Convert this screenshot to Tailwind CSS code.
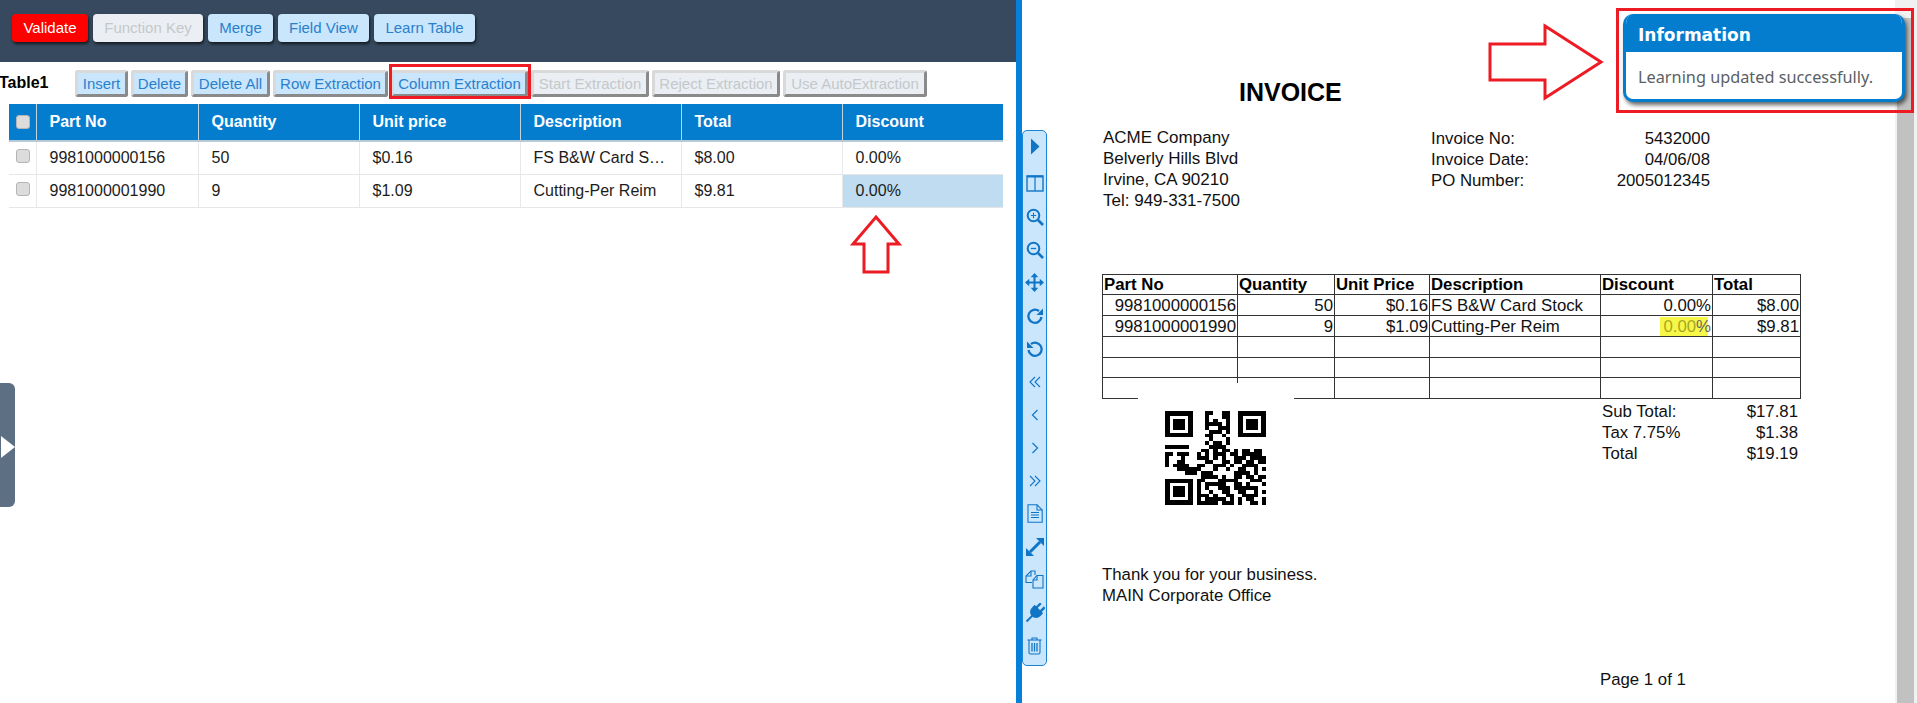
<!DOCTYPE html>
<html>
<head>
<meta charset="utf-8">
<script src="https://cdn.jsdelivr.net/npm/@tailwindcss/browser@4"></script>
</head>
<body class="bg-white">
<div class="relative flex w-[1917px] h-[703px] overflow-hidden font-['Liberation_Sans',Arial,sans-serif]">

  <!-- LEFT PANEL -->
  <div class="relative w-[1016px] shrink-0 h-full bg-white">
    <div class="h-[62px] bg-[#36495e] pt-[14px] pl-[12px] flex gap-[5px] text-[15px]">
      <button class="w-[76px] h-[28px] rounded-[4px] bg-[#ff0000] text-white shadow-[1px_2px_3px_rgba(0,0,0,0.65)]">Validate</button>
      <button class="w-[110px] h-[28px] rounded-[4px] bg-[#ebeff3] text-[#c4c8cc] shadow-[1px_2px_3px_rgba(0,0,0,0.65)]">Function Key</button>
      <button class="w-[65px] h-[28px] rounded-[4px] bg-[#c9e6fd] text-[#2a80cc] shadow-[1px_2px_3px_rgba(0,0,0,0.65)]">Merge</button>
      <button class="w-[91px] h-[28px] rounded-[4px] bg-[#c9e6fd] text-[#2a80cc] shadow-[1px_2px_3px_rgba(0,0,0,0.65)]">Field View</button>
      <button class="w-[101px] h-[28px] rounded-[4px] bg-[#c9e6fd] text-[#2a80cc] shadow-[1px_2px_3px_rgba(0,0,0,0.65)]">Learn Table</button>
    </div>

    <div class="mt-[8px] flex items-center h-[27px]">
      <div class="w-[75px] shrink-0 -ml-px text-[16px] font-bold text-black leading-[24px] -mt-[1px]">Table1</div>
      <div class="flex gap-[3px] text-[15px] ml-px">
        <button class="w-[53px] h-[27px] leading-none rounded-[3px] border-3 border-t-[#d9d9d9] border-l-[#d9d9d9] border-r-[#8a8a8a] border-b-[#8a8a8a] bg-[#c9e6fd] text-[#2a80cc]">Insert</button>
        <button class="w-[57px] h-[27px] leading-none rounded-[3px] border-3 border-t-[#d9d9d9] border-l-[#d9d9d9] border-r-[#8a8a8a] border-b-[#8a8a8a] bg-[#c9e6fd] text-[#2a80cc]">Delete</button>
        <button class="w-[79px] h-[27px] leading-none rounded-[3px] border-3 border-t-[#d9d9d9] border-l-[#d9d9d9] border-r-[#8a8a8a] border-b-[#8a8a8a] bg-[#c9e6fd] text-[#2a80cc] whitespace-nowrap">Delete All</button>
        <button class="w-[115px] h-[27px] leading-none rounded-[3px] border-3 border-t-[#d9d9d9] border-l-[#d9d9d9] border-r-[#8a8a8a] border-b-[#8a8a8a] bg-[#c9e6fd] text-[#2a80cc] whitespace-nowrap">Row Extraction</button>
        <div class="relative">
          <button class="w-[137px] h-[27px] leading-none rounded-[3px] border-3 border-t-[#d9d9d9] border-l-[#d9d9d9] border-r-[#8a8a8a] border-b-[#8a8a8a] bg-[#c9e6fd] text-[#2a80cc] whitespace-nowrap">Column Extraction</button>
          <div class="absolute left-[-2px] top-[-6px] w-[142px] h-[35px] border-3 border-[#ed1c24]"></div>
        </div>
        <button class="w-[118px] h-[27px] leading-none rounded-[3px] border-3 border-t-[#d9d9d9] border-l-[#d9d9d9] border-r-[#8a8a8a] border-b-[#8a8a8a] bg-[#ebeff3] text-[#c4c8cc] whitespace-nowrap">Start Extraction</button>
        <button class="w-[128px] h-[27px] leading-none rounded-[3px] border-3 border-t-[#d9d9d9] border-l-[#d9d9d9] border-r-[#8a8a8a] border-b-[#8a8a8a] bg-[#ebeff3] text-[#c4c8cc] whitespace-nowrap">Reject Extraction</button>
        <button class="w-[144px] h-[27px] leading-none rounded-[3px] border-3 border-t-[#d9d9d9] border-l-[#d9d9d9] border-r-[#8a8a8a] border-b-[#8a8a8a] bg-[#ebeff3] text-[#c4c8cc] whitespace-nowrap">Use AutoExtraction</button>
      </div>
    </div>

    <table class="mt-[7px] ml-[9px] w-[994px] table-fixed border-collapse text-[16px]">
      <colgroup>
        <col class="w-[27px]"><col class="w-[162px]"><col class="w-[161px]"><col class="w-[161px]"><col class="w-[161px]"><col class="w-[161px]"><col class="w-[161px]">
      </colgroup>
      <thead>
        <tr class="h-[37px] bg-[#047dcf] text-white font-bold text-left border-b-2 border-[#b9c9d6]">
          <th class="border-r border-[#c5d3de] pl-[7px]"><span class="block w-[14px] h-[14px] rounded-[3px] bg-[#dcdcdc] border border-[#b5b5b5]"></span></th>
          <th class="px-[13px] border-r border-[#c5d3de]">Part No</th>
          <th class="px-[13px] border-r border-[#c5d3de]">Quantity</th>
          <th class="px-[13px] border-r border-[#c5d3de]">Unit price</th>
          <th class="px-[13px] border-r border-[#c5d3de]">Description</th>
          <th class="px-[13px] border-r border-[#c5d3de]">Total</th>
          <th class="px-[13px]">Discount</th>
        </tr>
      </thead>
      <tbody class="text-[#1c1c1c]">
        <tr class="h-[33px] border-b border-[#e6e6e6]">
          <td class="border-r border-[#e8e8e8] pl-[7px] pb-[3px]"><span class="block w-[14px] h-[14px] rounded-[3px] bg-[#dcdcdc] border border-[#b5b5b5]"></span></td>
          <td class="px-[13px] pt-px border-r border-[#e8e8e8]">9981000000156</td>
          <td class="px-[13px] pt-px border-r border-[#e8e8e8]">50</td>
          <td class="px-[13px] pt-px border-r border-[#e8e8e8]">$0.16</td>
          <td class="px-[13px] pt-px border-r border-[#e8e8e8] whitespace-nowrap overflow-hidden">FS B&amp;W Card S…</td>
          <td class="px-[13px] pt-px border-r border-[#e8e8e8]">$8.00</td>
          <td class="px-[13px] pt-px">0.00%</td>
        </tr>
        <tr class="h-[33px] border-b border-[#e6e6e6]">
          <td class="border-r border-[#e8e8e8] pl-[7px] pb-[3px]"><span class="block w-[14px] h-[14px] rounded-[3px] bg-[#dcdcdc] border border-[#b5b5b5]"></span></td>
          <td class="px-[13px] pt-px border-r border-[#e8e8e8]">9981000001990</td>
          <td class="px-[13px] pt-px border-r border-[#e8e8e8]">9</td>
          <td class="px-[13px] pt-px border-r border-[#e8e8e8]">$1.09</td>
          <td class="px-[13px] pt-px border-r border-[#e8e8e8] whitespace-nowrap overflow-hidden">Cutting-Per Reim</td>
          <td class="px-[13px] pt-px border-r border-[#e8e8e8]">$9.81</td>
          <td class="px-[13px] pt-px bg-[#bfdcf1]">0.00%</td>
        </tr>
      </tbody>
    </table>

    <svg class="absolute left-[850px] top-[214px]" width="52" height="62" viewBox="850 214 52 62" fill="none"><path d="M876 217 L899 244 H888 V272 H864 V244 H853 Z" stroke="#ed1c24" stroke-width="3"/></svg>

    <div class="absolute left-0 top-[383px] w-[15px] h-[124px] bg-[#5d6f82] rounded-r-[6px] flex items-center">
      <svg width="15" height="24" viewBox="0 0 15 24" class="mt-[4px]"><path d="M1 1 L15 12 L1 23 Z" fill="#fff"/></svg>
    </div>
  </div>

  <!-- DIVIDER -->
  <div class="w-[6px] shrink-0 h-full bg-[#0680d9]"></div>

  <!-- RIGHT PANEL -->
  <div class="relative flex-1 flex h-full bg-white">
    <div class="flex-1 text-[17px] text-[#111] leading-[21px]">
      <div class="mt-[77px] pl-[217px] h-[30px] text-[25px] leading-[30px] font-bold text-black">INVOICE</div>

      <div class="mt-[20px] h-[84px] flex">
        <div class="ml-[81px] w-[328px]">
          <div>ACME Company</div>
          <div>Belverly Hills Blvd</div>
          <div>Irvine, CA 90210</div>
          <div>Tel: 949-331-7500</div>
        </div>
        <div class="w-[279px] flex flex-col mt-px text-[16.8px]">
          <div class="flex justify-between"><span>Invoice No:</span><span>5432000</span></div>
          <div class="flex justify-between"><span>Invoice Date:</span><span>04/06/08</span></div>
          <div class="flex justify-between"><span>PO Number:</span><span>2005012345</span></div>
        </div>
      </div>

      <div class="relative mt-[63px] ml-[80px] w-[698px]">
        <table class="w-[698px] table-fixed border-collapse border border-[#333] text-[16.8px] leading-[19px]">
          <colgroup>
            <col class="w-[135px]"><col class="w-[97px]"><col class="w-[95px]"><col class="w-[171px]"><col class="w-[112px]"><col class="w-[88px]">
          </colgroup>
          <tbody>
            <tr class="h-[20px] font-bold text-black border-b border-[#333]">
              <td class="pl-px border-r border-[#333]">Part No</td>
              <td class="pl-px border-r border-[#333]">Quantity</td>
              <td class="pl-px border-r border-[#333]">Unit Price</td>
              <td class="pl-px border-r border-[#333]">Description</td>
              <td class="pl-px border-r border-[#333]">Discount</td>
              <td class="pl-px">Total</td>
            </tr>
            <tr class="h-[21px] border-b border-[#333]">
              <td class="pr-px text-right border-r border-[#333]">9981000000156</td>
              <td class="pr-px text-right border-r border-[#333]">50</td>
              <td class="pr-px text-right border-r border-[#333]">$0.16</td>
              <td class="pl-px border-r border-[#333] whitespace-nowrap">FS B&amp;W Card Stock</td>
              <td class="pr-px text-right border-r border-[#333]">0.00%</td>
              <td class="pr-px text-right">$8.00</td>
            </tr>
            <tr class="h-[21px] border-b border-[#333]">
              <td class="pr-px text-right border-r border-[#333]">9981000001990</td>
              <td class="pr-px text-right border-r border-[#333]">9</td>
              <td class="pr-px text-right border-r border-[#333]">$1.09</td>
              <td class="pl-px border-r border-[#333] whitespace-nowrap">Cutting-Per Reim</td>
              <td class="pr-px text-right border-r border-[#333]"><span class="relative isolate text-[#a8a820]"><span class="absolute -z-10 inset-y-0 left-[-3px] right-[3px] bg-[#f7f74a]"></span>0.00<span class="text-[#666]">%</span></span></td>
              <td class="pr-px text-right">$9.81</td>
            </tr>
            <tr class="h-[21px] border-b border-[#333]"><td class="border-r border-[#333]"></td><td class="border-r border-[#333]"></td><td class="border-r border-[#333]"></td><td class="border-r border-[#333]"></td><td class="border-r border-[#333]"></td><td></td></tr>
            <tr class="h-[20px] border-b border-[#333]"><td class="border-r border-[#333]"></td><td class="border-r border-[#333]"></td><td class="border-r border-[#333]"></td><td class="border-r border-[#333]"></td><td class="border-r border-[#333]"></td><td></td></tr>
            <tr class="h-[21px]"><td class="border-r border-[#333]"></td><td class="border-r border-[#333]"></td><td class="border-r border-[#333]"></td><td class="border-r border-[#333]"></td><td class="border-r border-[#333]"></td><td></td></tr>
          </tbody>
        </table>
        <div class="absolute left-[36px] top-[109px] w-[156px] h-[17px] bg-white"></div>
      </div>

      <div class="flex pl-[143px] h-[166px] text-[16.8px]">
        <svg class="mt-[12px] shrink-0" width="101" height="94" viewBox="0 0 25 25" preserveAspectRatio="none" shape-rendering="crispEdges">
          <path fill="#000" fill-rule="evenodd" d="M0 0h7v7h-7z M1.25 1.25v4.5h4.5v-4.5z M2 2h3v3h-3z M18 0h7v7h-7z M19.25 1.25v4.5h4.5v-4.5z M20 2h3v3h-3z M0 18h7v7h-7z M1.25 19.25v4.5h4.5v-4.5z M2 20h3v3h-3z"/>
          <path fill="none" stroke="#000" stroke-width="1" d="M10 .5h2M14 .5h2 M10 1.5h1M14 1.5h2 M10 2.5h1M12 2.5h1M15 2.5h1 M10 3.5h2M12 3.5h2M15 3.5h1 M10 4.5h1M13 4.5h2M15 4.5h1 M11 5.5h3M15 5.5h1 M10 6.5h2M14 6.5h1 M11 7.5h1M15 7.5h1 M10 8.5h1M12 8.5h2M15 8.5h1 M0 9.5h6M11 9.5h2M13 9.5h2 M9 10.5h2M12 10.5h1M14 10.5h2M17 10.5h1M19 10.5h2M22 10.5h2 M0 11.5h2M3 11.5h3M8 11.5h1M10 11.5h1M12 11.5h3M16 11.5h2M19 11.5h5 M0 12.5h1M4 12.5h1M8 12.5h3M12 12.5h1M14 12.5h1M17 12.5h3M21 12.5h4 M0 13.5h1M3 13.5h2M10 13.5h2M14 13.5h2M17 13.5h2M20 13.5h2M23 13.5h2 M0 14.5h1M2 14.5h4M8 14.5h2M12 14.5h3M16 14.5h1M19 14.5h4 M3 15.5h6M12 15.5h1M15 15.5h1M18 15.5h2M22 15.5h1M24 15.5h1 M5 16.5h3M9 16.5h3M17 16.5h4M22 16.5h1 M9 17.5h4M14 17.5h1M17 17.5h2M20 17.5h2M23 17.5h2 M8 18.5h2M13 18.5h5M21 18.5h3 M8 19.5h1M10 19.5h5M17 19.5h2M20 19.5h1M24 19.5h1 M8 20.5h1M10 20.5h1M13 20.5h3M17 20.5h6 M8 21.5h1M11 21.5h1M14 21.5h2M18 21.5h2M22 21.5h1M24 21.5h1 M8 22.5h3M12 22.5h1M15 22.5h2M19 22.5h4 M8 23.5h1M10 23.5h5M16 23.5h1M18 23.5h1M20 23.5h2M24 23.5h1 M8 24.5h5M14 24.5h3M18 24.5h1M21 24.5h2M24 24.5h1"/>
        </svg>
        <div class="ml-[336px] w-[196px] mt-[2px]">
          <div class="flex justify-between"><span>Sub Total:</span><span>$17.81</span></div>
          <div class="flex justify-between"><span>Tax 7.75%</span><span>$1.38</span></div>
          <div class="flex justify-between"><span>Total</span><span>$19.19</span></div>
        </div>
      </div>

      <div class="pl-[80px] -mt-px text-[16.8px]">
        <div>Thank you for your business.</div>
        <div>MAIN Corporate Office</div>
      </div>
      <div class="mt-[63px] pl-[578px] text-[16.8px]">Page 1 of 1</div>
    </div>

    <!-- SCROLLBAR -->
    <div class="w-[22px] shrink-0 h-full bg-[#f1f1f1] pt-[18px] pl-[2px]">
      <div class="w-[17px] h-full bg-[#c1c1c1]"></div>
    </div>

    <!-- VIEWER TOOLBAR -->
    <div class="absolute left-0 top-[130px] w-[25px] h-[536px] bg-[#c9e6fd] border border-[#1a85d8] rounded-[5px] text-[#1175c6] flex flex-col items-center">
      <div class="h-[31px] mb-[5px] flex items-center justify-center shrink-0"><svg width="10" height="17" viewBox="0 0 10 17"><path d="M1 0.5 L9.5 8.5 L1 16.5 Z" fill="currentColor"/></svg></div>
      <div class="h-[33px] flex items-center justify-center shrink-0"><svg width="18" height="17" viewBox="0 0 18 17" fill="none" stroke="currentColor"><rect x="1" y="1" width="16" height="15" stroke-width="1.4"/><path d="M1 1.5H17" stroke-width="2"/><path d="M9 1V16" stroke-width="1.2"/></svg></div>
      <div class="h-[33px] flex items-center justify-center shrink-0"><svg width="18" height="18" viewBox="0 0 18 18" fill="none" stroke="currentColor"><circle cx="7.5" cy="7.5" r="5.8" stroke-width="2"/><path d="M12 12L17 17" stroke-width="2.6"/><path d="M7.5 4.8V10.2M4.8 7.5H10.2" stroke-width="1.1"/></svg></div>
      <div class="h-[33px] flex items-center justify-center shrink-0"><svg width="18" height="18" viewBox="0 0 18 18" fill="none" stroke="currentColor"><circle cx="7.5" cy="7.5" r="5.8" stroke-width="2"/><path d="M12 12L17 17" stroke-width="2.6"/><path d="M4.8 7.5H10.2" stroke-width="1.3"/></svg></div>
      <div class="h-[33px] flex items-center justify-center shrink-0"><svg width="19" height="19" viewBox="0 0 20 20" fill="currentColor"><path d="M10 3V17M3 10H17" stroke="currentColor" stroke-width="2.2"/><path d="M10 0L14 4.5H6Z M10 20L14 15.5H6Z M0 10L4.5 6V14Z M20 10L15.5 6V14Z"/></svg></div>
      <div class="h-[33px] flex items-center justify-center shrink-0"><svg width="18" height="18" viewBox="0 0 18 18" fill="none"><path d="M15.5 10A6.6 6.6 0 1 1 13 4" stroke="currentColor" stroke-width="2.3"/><path d="M17 1.5V8H10.5Z" fill="currentColor"/></svg></div>
      <div class="h-[33px] flex items-center justify-center shrink-0"><svg width="18" height="18" viewBox="0 0 18 18" fill="none"><path d="M2.5 10A6.6 6.6 0 1 0 5 4" stroke="currentColor" stroke-width="2.3"/><path d="M1 1.5V8H7.5Z" fill="currentColor"/></svg></div>
      <div class="h-[33px] flex items-center justify-center shrink-0"><svg width="12" height="12" viewBox="0 0 12 12" fill="none" stroke="currentColor" stroke-width="1.1"><path d="M6 1L1 6L6 11M11 1L6 6L11 11"/></svg></div>
      <div class="h-[33px] flex items-center justify-center shrink-0"><svg width="8" height="12" viewBox="0 0 8 12" fill="none" stroke="currentColor" stroke-width="1.2"><path d="M6.5 1L1.5 6L6.5 11"/></svg></div>
      <div class="h-[33px] flex items-center justify-center shrink-0"><svg width="8" height="12" viewBox="0 0 8 12" fill="none" stroke="currentColor" stroke-width="1.2"><path d="M1.5 1L6.5 6L1.5 11"/></svg></div>
      <div class="h-[33px] flex items-center justify-center shrink-0"><svg width="12" height="12" viewBox="0 0 12 12" fill="none" stroke="currentColor" stroke-width="1.1"><path d="M1 1L6 6L1 11M6 1L11 6L6 11"/></svg></div>
      <div class="h-[33px] flex items-center justify-center shrink-0"><svg width="16" height="19" viewBox="0 0 16 19" fill="none" stroke="currentColor" stroke-width="1.1"><path d="M1 .8H10L15.2 6V18.2H1Z"/><path d="M10 .8V6H15.2"/><path d="M4 8.5H12M4 11H12M4 13.5H12" stroke-width="1.2"/></svg></div>
      <div class="h-[33px] flex items-center justify-center shrink-0"><svg width="18" height="18" viewBox="0 0 18 18" fill="currentColor"><path d="M4 14L14 4" stroke="currentColor" stroke-width="3"/><path d="M10 0H18V8Z M0 10V18H8Z"/></svg></div>
      <div class="h-[33px] flex items-center justify-center shrink-0"><svg width="19" height="19" viewBox="0 0 19 19" fill="none" stroke="currentColor" stroke-width="1.1"><path d="M7 12.5H1V6L6 1H10V5"/><path d="M6 1V6H1"/><path d="M8 18V10L12 5.5H18V18Z"/><path d="M12 5.5V10H8"/></svg></div>
      <div class="h-[33px] flex items-center justify-center shrink-0"><svg width="20" height="20" viewBox="0 0 20 20" fill="currentColor"><g transform="rotate(45 10 10)"><rect x="6" y="-1" width="2.4" height="6"/><rect x="11.6" y="-1" width="2.4" height="6"/><path d="M4 4.5H16V8.5A6 6 0 0 1 4 8.5Z"/><rect x="9" y="13" width="2" height="9"/></g></svg></div>
      <div class="h-[33px] flex items-center justify-center shrink-0"><svg width="15" height="18" viewBox="0 0 15 18" fill="none" stroke="currentColor" stroke-width="1.1"><path d="M.5 3H14.5"/><path d="M5 3V1H10V3"/><path d="M2 3V15.5Q2 17 3.5 17H11.5Q13 17 13 15.5V3"/><path d="M5 6V14.5M7.5 6V14.5M10 6V14.5" stroke-width="1.3"/></svg></div>
    </div>
  </div>

  <!-- OVERLAYS: annotation arrow, toast and highlight box -->
  <svg class="absolute left-[1485px] top-[20px]" width="122" height="84" viewBox="1485 20 122 84" fill="none"><path d="M1490 44H1545V26L1601 62L1545 98V80H1490Z" stroke="#ed1c24" stroke-width="3"/></svg>

  <div class="absolute left-[1623px] top-[14px] w-[282px] h-[88px] rounded-[10px] border-x-[3px] border-b-[3px] border-[#047dcf] bg-white shadow-[2px_3px_4px_rgba(0,0,0,0.6)] overflow-hidden">
    <div class="h-[38px] -mx-[3px] bg-[#047dcf] pl-[15px] text-white font-['DejaVu_Sans',sans-serif] font-bold text-[17px] leading-[42px]">Information</div>
    <div class="pl-[12px] pt-[15px] text-[#5a5f66] font-['Noto_Sans',sans-serif] text-[16.3px] leading-[20px] whitespace-nowrap">Learning updated successfully.</div>
  </div>
  <div class="absolute left-[1616px] top-[8px] w-[298px] h-[105px] border-3 border-[#ed1c24]"></div>
</div>
</body>
</html>
